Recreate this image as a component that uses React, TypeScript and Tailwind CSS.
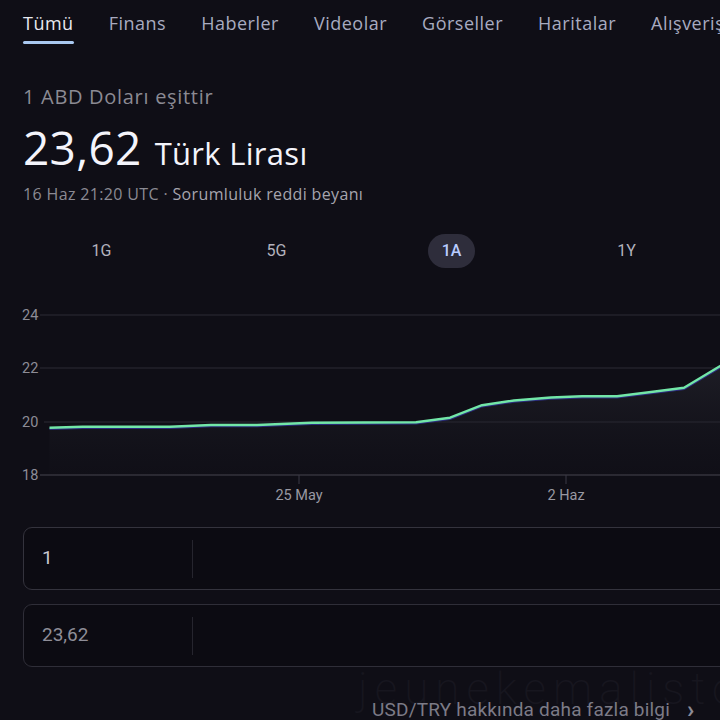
import React from "react";

const pts: [number, number][] = [
  [49.5, 427.7],
  [82.6, 426.7],
  [170, 426.7],
  [211, 425],
  [257, 425],
  [312, 422.7],
  [416, 422.3],
  [450, 417.7],
  [482, 405.2],
  [514, 400.5],
  [551, 397.5],
  [582, 396.2],
  [617, 396.2],
  [653, 391.8],
  [684, 387.7],
  [722, 365],
];

function Chart() {
  const line = pts.map((p, i) => `${i ? "L" : "M"}${p[0]},${p[1] - 300}`).join(" ");
  const area = `${line} L722,175 L49.5,175 Z`;
  return (
    <svg width="720" height="215" viewBox="0 0 720 215" className="block">
      <defs>
        <linearGradient id="fillg" x1="0" y1="0" x2="0" y2="1">
          <stop offset="0%" stopColor="#2a2a33" stopOpacity="0.55" />
          <stop offset="100%" stopColor="#1a1a22" stopOpacity="0.1" />
        </linearGradient>
      </defs>
      <g fontFamily="Roboto, 'Liberation Sans', sans-serif" fontSize="14.5" fill="#8d8c96">
        <text x="22" y="20">24</text>
        <text x="22" y="73">22</text>
        <text x="22" y="127">20</text>
        <text x="22" y="180">18</text>
      </g>
      <g stroke="#2c2b35" strokeWidth="1.2">
        <line x1="40" y1="15" x2="720" y2="15" />
        <line x1="40" y1="68" x2="720" y2="68" />
        <line x1="44" y1="122" x2="720" y2="122" />
      </g>
      <path d={area} fill="url(#fillg)" />
      <line x1="40" y1="175" x2="720" y2="175" stroke="#34333d" strokeWidth="1.3" />
      <line x1="299" y1="175" x2="299" y2="184" stroke="#3a3944" strokeWidth="1" />
      <line x1="566" y1="175" x2="566" y2="184" stroke="#3a3944" strokeWidth="1" />
      <path d={line} fill="none" stroke="#3a3cc0" strokeWidth="2.5" transform="translate(0,1)" opacity="0.6" />
      <path d={line} fill="none" stroke="#72e6a8" strokeWidth="2.4" strokeLinejoin="round" />
      <g fontFamily="Roboto, 'Liberation Sans', sans-serif" fontSize="14.5" fill="#9998a2" textAnchor="middle">
        <text x="299" y="200">25 May</text>
        <text x="566" y="200">2 Haz</text>
      </g>
    </svg>
  );
}

export default function App() {
  const tabs = ["Tümü", "Finans", "Haberler", "Videolar", "Görseller", "Haritalar", "Alışveriş"];
  const ranges = ["1G", "5G", "1A", "1Y", "5Y"];
  return (
    <div
      className="w-[720px] h-[720px] overflow-hidden bg-[#0f0e16] text-white"
      style={{ fontFamily: "Roboto, 'Liberation Sans', sans-serif" }}
    >
      {/* tabs */}
      <div className="flex gap-[35px] pl-[23px] pt-[10px] whitespace-nowrap font-['Open_Sans',sans-serif] text-[18px] tracking-[0.5px]">
        {tabs.map((t, i) => (
          <div key={t} className="flex flex-col shrink-0">
            <span className={i === 0 ? "text-[#e8e9f0] leading-[26px]" : "text-[#a8abc0] leading-[26px]"}>{t}</span>
            <div className={i === 0 ? "mt-[5px] h-[3px] rounded-full bg-[#a9c8f0]" : "mt-[5px] h-[3px]"} />
          </div>
        ))}
      </div>

      {/* heading */}
      <div className="pl-[23px] pt-[40px] font-['Open_Sans',sans-serif]">
        <div className="text-[20px] leading-[26px] text-[#8b8a93] tracking-[0.7px]">1 ABD Doları eşittir</div>
        <div className="mt-[12px] flex items-baseline gap-[13px] leading-[50px]">
          <span className="text-[46px] text-[#f4f4fb] tracking-[0.3px]">23,62</span>
          <span className="text-[31px] text-[#f4f4fb] tracking-[0.3px]">Türk Lirası</span>
        </div>
        <div className="mt-[6px] text-[16px] leading-[20px] text-[#8b8a93] tracking-[0.35px]">
          16 Haz 21:20 UTC · <span className="text-[#a6a5ae]">Sorumluluk reddi beyanı</span>
        </div>
      </div>

      {/* ranges */}
      <div className="flex pl-[14px] mt-[30px] whitespace-nowrap">
        {ranges.map((r) => (
          <div key={r} className="w-[175px] shrink-0 flex justify-center">
            <span
              className={
                r === "1A"
                  ? "h-[34px] w-[47px] rounded-full bg-[#2e2d3b] text-[#b9ccff] text-[16px] flex items-center justify-center font-medium"
                  : "h-[34px] w-[47px] text-[#b3b2bd] text-[16px] flex items-center justify-center"
              }
            >
              {r}
            </span>
          </div>
        ))}
      </div>

      {/* chart */}
      <div className="mt-[32px]">
        <Chart />
      </div>

      {/* converter */}
      <div className="ml-[23px] mt-[12px] flex flex-col gap-[14px] w-[720px]">
        <div className="h-[63px] rounded-[9px] border border-[#34333d] bg-[#0c0b12] flex items-center">
          <div className="w-[168px] pl-[18px] text-[19px] text-[#c9c8d0]">1</div>
          <div className="h-[38px] w-px bg-[#26252e]" />
        </div>
        <div className="h-[63px] rounded-[9px] border border-[#2f2e38] bg-[#0c0b12] flex items-center">
          <div className="w-[168px] pl-[18px] text-[19px] text-[#8f8e98]">23,62</div>
          <div className="h-[38px] w-px bg-[#26252e]" />
        </div>
      </div>

      {/* footer */}
      <div className="pl-[358px] mt-[8px] whitespace-nowrap">
        <div className="text-[44px] leading-[28px] h-[24px] font-extralight text-[#17161f] tracking-[7px]">jeunekemalisto</div>
        <div className="pl-[14px] flex items-center gap-[17px] text-[19px] tracking-[0.2px] leading-[22px] text-[#7c7b87]">
          <span>USD/TRY hakkında daha fazla bilgi</span>
          <span className="text-[#8c8b96] text-[24px] leading-[22px] font-bold">›</span>
        </div>
      </div>
    </div>
  );
}
